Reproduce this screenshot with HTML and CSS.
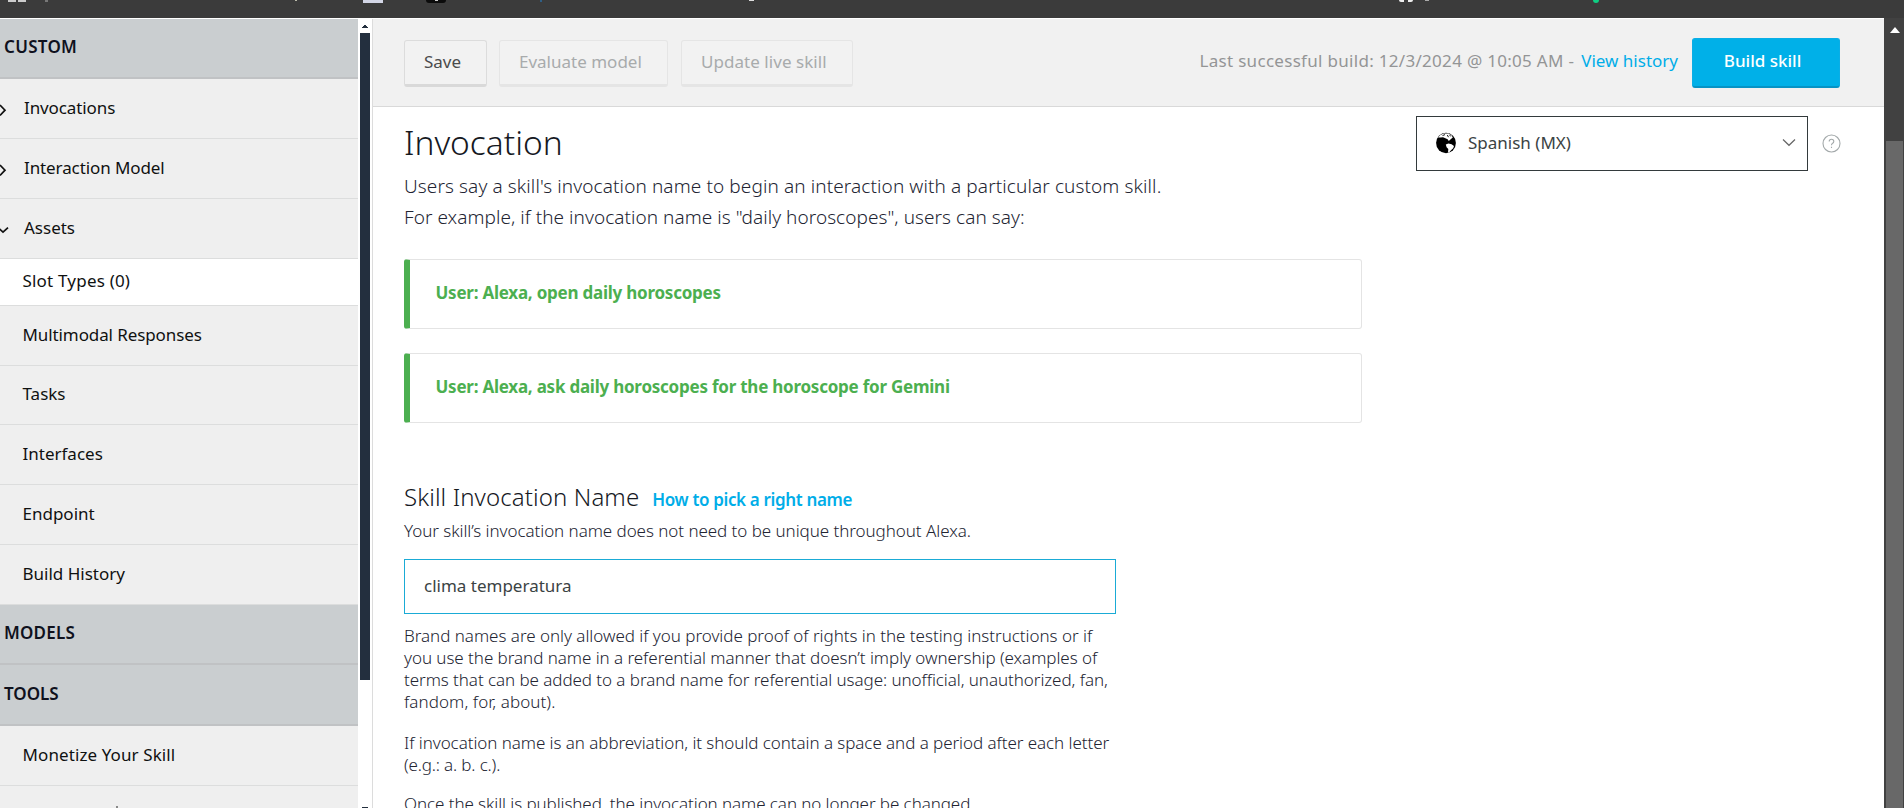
FILE: index.html
```
<!DOCTYPE html>
<html lang="en">
<head>
<meta charset="utf-8">
<title>Invocation</title>
<link rel="stylesheet" href="styles.css">
</head>
<body>
<div class="page">
  <div class="tabs">
    <i class="tab-bit bit-a"></i><i class="tab-bit bit-a2"></i><i class="tab-bit bit-b"></i><i class="tab-bit bit-b2"></i><i class="tab-bit bit-c"></i><i class="tab-bit bit-d"></i><i class="tab-bit bit-e"></i><i class="tab-bit bit-f"></i><i class="tab-bit bit-g"></i><i class="tab-bit bit-h"></i><i class="tab-bit bit-i"></i><i class="tab-bit bit-j"></i>
  </div>
  <div class="body">
    <nav class="side">
      <div class="group"><span class="t1">CUSTOM</span></div>
      <div class="row parent"><svg class="caret" width="24" height="14" viewBox="0 0 24 14"><path d="M0 2 L5 7.2 L0 12.4"/></svg><span class="t2">Invocations</span></div>
      <div class="row parent"><svg class="caret" width="24" height="14" viewBox="0 0 24 14"><path d="M0 2 L5 7.2 L0 12.4"/></svg><span class="t3">Interaction Model</span></div>
      <div class="row parent"><svg class="caret" width="24" height="14" viewBox="0 0 24 14"><path d="M-2 4.6 L3 9.2 L8 4.6"/></svg><span class="t4">Assets</span></div>
      <div class="row open"><span class="t5">Slot Types (0)</span></div>
      <div class="row"><span class="t6">Multimodal Responses</span></div>
      <div class="row short"><span class="t7">Tasks</span></div>
      <div class="row"><span class="t8">Interfaces</span></div>
      <div class="row"><span class="t9">Endpoint</span></div>
      <div class="row"><span class="t10">Build History</span></div>
      <div class="group"><span class="t11">MODELS</span></div>
      <div class="group tall"><span class="t12">TOOLS</span></div>
      <div class="row"><span class="t13">Monetize Your Skill</span></div>
      <div class="row last"><i class="cut"></i></div>
    </nav>
    <div class="side-scroll">
      <svg class="up" width="6" height="3" viewBox="0 0 6 3"><path d="M2 0h2v1h1v1h1v1H0V2h1V1h1z"/></svg>
      <i class="side-thumb"></i>
      <i class="down"></i>
    </div>
    <main class="main">
      <header class="bar">
        <button class="btn save"><span class="t14">Save</span></button>
        <button class="btn off eval"><span class="t15">Evaluate model</span></button>
        <button class="btn off live"><span class="t16">Update live skill</span></button>
        <div class="status"><span class="t17">Last successful build: 12/3/2024 @ 10:05 AM -</span><a class="link t18">View history</a></div>
        <button class="build"><span class="t19">Build skill</span></button>
      </header>
      <div class="content">
        <section class="left">
          <h1><span class="t20">Invocation</span></h1>
          <p class="intro"><span class="t21">Users say a skill's invocation name to begin an interaction with a particular custom skill.</span><br><span class="t22">For example, if the invocation name is "daily horoscopes", users can say:</span></p>
          <div class="sample"><span class="t23">User: Alexa, open daily horoscopes</span></div>
          <div class="sample second"><span class="t24">User: Alexa, ask daily horoscopes for the horoscope for Gemini</span></div>
          <div class="name-head"><h2><span class="t25">Skill Invocation Name</span></h2><a class="link strong t26">How to pick a right name</a></div>
          <p class="sub"><span class="t27">Your skill’s invocation name does not need to be unique throughout Alexa.</span></p>
          <div class="field"><span class="t28">clima temperatura</span></div>
          <p class="note"><span class="t29">Brand names are only allowed if you provide proof of rights in the testing instructions or if</span><br><span class="t30">you use the brand name in a referential manner that doesn’t imply ownership (examples of</span><br><span class="t31">terms that can be added to a brand name for referential usage: unofficial, unauthorized, fan,</span><br><span class="t32">fandom, for, about).</span></p>
          <p class="note n2"><span class="t33">If invocation name is an abbreviation, it should contain a space and a period after each letter</span><br><span class="t34">(e.g.: a. b. c.).</span></p>
          <p class="note n3"><span class="t35">Once the skill is published, the invocation name can no longer be changed.</span></p>
        </section>
        <aside class="right">
          <div class="select">
            <svg class="globe" width="20" height="22" viewBox="0 0 20 22"><ellipse cx="10" cy="11" rx="9.9" ry="10.2" fill="#000"/><path fill="#fff" d="M2 5.600 4.400 3.100 7.800 1.500 12.500 1.500 15.500 3.200 16.800 5.500 15 7 12.800 9 11.600 7.300 9.400 6.200 7 5.200 4.500 5.400zM9.800 12.400l2.600-.8 3.200.7 2.400 1.700-.8 2.200-2.200 2-1.700 2-1.300.2.300-3.300-1.700-1.900z"/><path d="M6.500 3.600 9 2.600M11.300 3l1.200 2.200M13.500 2.800l1.200 1.600" stroke="#000" stroke-width=".9" fill="none"/></svg>
            <span class="t36">Spanish (MX)</span>
            <svg class="chev" width="14" height="9" viewBox="0 0 14 9"><path d="M1 1.500 7 7.300 13 1.500"/></svg>
          </div>
          <svg class="help" width="19" height="19" viewBox="0 0 19 19"><circle cx="9.500" cy="9.500" r="8.500"/><path d="M7.200 7.500Q7.200 5.300 9.500 5.300T11.800 7.400Q11.800 8.600 10.300 9.500 9.500 10 9.500 11.300M9.500 12.700V14"/></svg>
        </aside>
      </div>
    </main>
    <div class="page-scroll">
      <svg class="tri" width="10" height="6" viewBox="0 0 10 6"><path d="M5 0 10 6H0z"/></svg>
      <i class="page-thumb"></i>
    </div>
  </div>
</div>
</body>
</html>
```
FILE: styles.css
```
* { box-sizing: border-box; }
body { margin: 0; background: #fff; font-family: "Noto Sans", "Open Sans", sans-serif; font-size: 17px; color: #16191f; }
i { display: block; }
h1, h2, p { margin: 0; font-weight: 300; }
button { font: inherit; }
span, a { white-space: nowrap; }

.page { width: 1904px; height: 808px; overflow: hidden; display: flex; flex-direction: column; }
.tabs { height: 18px; flex: none; background: #3b3b3b; position: relative; }
.tab-bit { position: absolute; top: 0; height: 2px; }
.bit-a { left: 8px; width: 8px; background: #ccc; }
.bit-a2 { left: 18px; width: 8px; background: #ccc; }
.bit-b { left: 45px; width: 3px; background: #777; }
.bit-b2 { left: 295px; width: 2px; height: 1px; background: #bba; }
.bit-c { left: 363px; width: 20px; height: 3px; background: #d3d6e6; }
.bit-d { left: 426px; width: 20px; height: 3px; background: #0b0b0b; border-radius: 0 0 4px 4px; }
.bit-e { left: 435px; width: 3px; height: 1px; background: #ccc; }
.bit-f { left: 540px; width: 2px; background: #2f5f86; }
.bit-g { left: 749px; width: 5px; height: 1px; background: #ddd; }
.bit-h { left: 1399px; width: 14px; background: linear-gradient(90deg, #eee 5px, #3b3b3b 5px 9px, #eee 9px); border-radius: 0 0 4px 4px; }
.bit-i { left: 1425px; width: 4px; height: 1px; background: #aaa; }
.bit-j { left: 1593px; width: 6px; height: 3px; background: #0fce83; border-radius: 0 0 3px 3px; }

.body { flex: 1; min-height: 0; display: flex; padding-top: 1px; }
.side { width: 358px; flex: none; overflow: hidden; color: #0f1111; }
.group { height: 60px; background: #caced0; border-bottom: 2px solid #c0c2c4; padding: 0 0 3px 4px; display: flex; align-items: center; font-weight: 600; color: #0f111d; }
.group.tall { height: 61px; }
.row { height: 60px; background: #efefef; border-bottom: 1px solid #dcdddd; padding: 0 0 2px 22.500px; display: flex; align-items: center; }
.row.parent { padding-left: 0; }
.row.short { height: 59px; padding-bottom: 3px; }
.row.open { height: 47px; background: #fff; padding-bottom: 4px; }
.row.last { align-items: flex-start; padding-left: 116px; }
.cut { width: 2px; height: 2px; margin-top: 20px; background: #888; }
.caret { flex: none; margin-top: 4px; fill: none; stroke: #111; stroke-width: 1.7; }
.side-scroll { width: 14px; flex: none; padding: 6px 2px 0; display: flex; flex-direction: column; align-items: center; }
.up { fill: #232f3e; flex: none; }
.side-thumb { width: 10px; height: 647px; margin-top: 5px; background: #232f3e; flex: none; }
.down { width: 6px; height: 1px; background: #232f3e; margin-top: 127px; flex: none; }

.main { flex: 1; min-width: 0; border-left: 1px solid #dcdcdc; display: flex; flex-direction: column; overflow: hidden; }
.bar { height: 88px; flex: none; background: #f1f1f1; border-bottom: 1px solid #d9d9d9; display: flex; align-items: flex-start; padding: 21px 44px 0 31px; }
.btn { height: 47px; border: 1px solid #dcdcdc; border-bottom: 3px solid #d9d9d9; border-radius: 3px; background: #f2f2f2; color: #4a4b4c; padding: 0 0 3px 19px; text-align: left; }
.save { width: 83px; }
.eval { width: 169px; margin-left: 12px; }
.live { width: 172px; margin-left: 13px; }
.btn.off { color: #a8abac; border-color: #e5e5e5; }
.status { margin-left: auto; display: flex; gap: 7px; color: #949596; line-height: 24px; padding-top: 9px; }
.link { color: #00ade8; }
.build { width: 148px; height: 50px; margin: -2px 0 0 14px; border: 1px solid #0aaee6; border-bottom: 2px solid #0693c5; border-radius: 3px; background: #00b0e8; color: #fff; padding: 0 7px 4px 0; font-weight: 500; text-align: center; }

.content { display: flex; padding-left: 31px; }
.left { width: 958px; flex: none; }
h1 { font-size: 33.500px; line-height: 44px; padding-top: 13px; }
.intro { font-size: 19px; line-height: 31px; padding-top: 7px; font-weight: 300; color: #222432; }
.sample { height: 70px; margin-top: 26px; border: 1px solid #e4e4e4; border-left: 6px solid #4caf50; border-radius: 3px; padding: 0 0 3px 25.500px; display: flex; align-items: center; color: #4caf50; font-weight: 700; }
.sample.second { margin-top: 24px; }
.name-head { display: flex; align-items: baseline; gap: 13px; margin-top: 56px; }
h2 { font-size: 24px; line-height: 36px; }
.strong { font-weight: 600; }
.sub { line-height: 24px; margin-top: 4px; color: #222432; }
.field { width: 712px; height: 55px; margin-top: 16px; border: 1px solid #1aabd6; padding: 0 0 2px 19px; display: flex; align-items: center; color: #3b4344; }
.note { line-height: 22px; margin-top: 11px; color: #222432; }
.n2 { margin-top: 19px; }
.n3 { margin-top: 17px; }
.right { display: flex; align-items: flex-start; padding: 9px 0 0 54px; }
.select { width: 392px; height: 55px; border: 1px solid #333a3c; display: flex; align-items: center; padding: 0 11px 2px 19px; color: #3b4344; }
.globe { flex: none; margin-right: 12px; }
.chev { margin-left: auto; fill: none; stroke: #666; stroke-width: 1.2; }
.help { margin: 18px 0 0 14px; fill: none; stroke: #a3a9aa; stroke-width: 1.1; }

/* Tracking per label */
.t1 { letter-spacing: .3px; }
.t2, .t3, .t6 { letter-spacing: -.1px; }
.t5 { letter-spacing: .2px; }
.t11 { letter-spacing: .2px; }
.t13 { letter-spacing: .1px; }
.t16 { letter-spacing: .05px; }
.t17 { letter-spacing: .3px; }
.t21 { letter-spacing: .107px; }
.t22 { letter-spacing: .05px; }
.t23, .t24 { letter-spacing: -.237px; }
.t25 { letter-spacing: .11px; }
.t26 { letter-spacing: -.35px; }
.t27 { letter-spacing: -.055px; }
.t33 { letter-spacing: -.065px; }
.t29 { letter-spacing: -.03px; }
.t30 { letter-spacing: -.05px; }
.t31 { letter-spacing: -.065px; }
.t32 { letter-spacing: .08px; }
.t34 { letter-spacing: -.15px; }
.t35 { letter-spacing: -.08px; }

.page-scroll { width: 20px; flex: none; margin-top: -1px; background: #414141; display: flex; flex-direction: column; padding: 9px 1px 0 2px; align-items: center; }
.tri { fill: #fff; flex: none; }
.page-thumb { width: 17px; flex: 1; margin-top: 108px; background: #686868; }
```
